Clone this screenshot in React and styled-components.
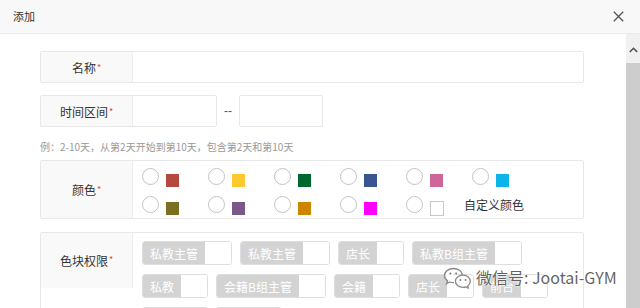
import React from 'react';
import styled, { createGlobalStyle } from 'styled-components';

const Global = createGlobalStyle`
  html, body { margin: 0; padding: 0; background: #fff; }
  body {
    width: 640px; height: 308px; overflow: hidden;
    font-family: "Noto Sans CJK SC", "Noto Sans", sans-serif;
    color: #333;
  }
  * { box-sizing: border-box; }
`;

const Dialog = styled.div`
  width: 640px; height: 308px;
  display: flex; flex-direction: column;
  position: relative; overflow: hidden; background: #fff;
`;

const Header = styled.div`
  height: 34px; flex: none;
  border-bottom: 1px solid #ebebeb;
  background: #f8f8f8;
  display: flex; align-items: center; justify-content: space-between;
  padding: 0 16px 0 13px;
`;

const Title = styled.div`
  font-size: 11px; color: #333; line-height: 1;
`;

const CloseBtn = styled.div`
  width: 11px; height: 11px; display: flex;
`;

const Body = styled.div`
  flex: 1; display: flex; min-height: 0;
`;

const Content = styled.div`
  flex: 1; padding: 17px 0 0 40px; overflow: hidden;
`;

const Form = styled.div`
  width: 544px; display: flex; flex-direction: column;
`;

const Scrollbar = styled.div`
  width: 14px; flex: none; background: #f1f1f1;
  display: flex; flex-direction: column;
`;

const ScrollUp = styled.div`
  height: 29px; flex: none; display: flex; justify-content: center;
  padding-top: 13px;
`;

const Thumb = styled.div`
  flex: 1; background: #cdcdcd;
`;

const FieldRow = styled.div`
  display: flex; align-items: center;
  margin-top: ${p => p.$mt || 0}px;
`;

const FieldBox = styled.div`
  display: flex; align-items: stretch;
  border: 1px solid #e8e8e8; border-radius: 2px;
  width: ${p => p.$w ? p.$w + 'px' : '100%'};
  min-height: ${p => p.$h || 32}px;
  background: #fff;
`;

const Label = styled.div`
  width: 92px; flex: none;
  background: #f9f9f9; border-right: 1px solid #eeeeee;
  display: flex; align-items: center; justify-content: center;
  font-size: 12px; color: #333;
  height: ${p => p.$h ? p.$h + 'px' : 'auto'};
  align-self: ${p => p.$h ? 'flex-start' : 'stretch'};
`;

const Star = styled.span`
  color: #f33; font-size: 9px; align-self: flex-start;
  margin-top: ${p => p.$top || 9}px; margin-left: 1px;
`;

const Input = styled.div`
  flex: 1; background: #fff;
`;

const Dash = styled.span`
  font-family: "Liberation Sans", sans-serif;
  font-size: 12px; color: #555; margin: 0 7px 0 7px; letter-spacing: 0;
`;

const SoloInput = styled.div`
  width: 84px; height: 32px;
  border: 1px solid #e8e8e8; border-radius: 2px; background: #fff;
`;

const Hint = styled.div`
  font-size: 10px; color: #999; line-height: 20px;
  margin: 10px 0 3px 0; white-space: nowrap;
`;

const ColorArea = styled.div`
  flex: 1; padding: 1px 0 0 9px;
  display: flex; flex-direction: column;
`;

const ColorLine = styled.div`
  height: 28px; display: flex; align-items: center;
`;

const ColorItem = styled.div`
  width: ${p => p.$w || 66}px; flex: none;
  display: flex; align-items: center;
`;

const Radio = styled.span`
  width: 17px; height: 17px; border-radius: 50%;
  border: 1px solid #c2c2c2; background: #fff; flex: none;
`;

const Swatch = styled.span`
  width: ${p => p.$plain ? 14 : 13}px;
  height: ${p => p.$plain ? 15 : 13}px;
  margin-left: 7px; margin-top: 8px;
  background: ${p => p.$c};
  border: ${p => p.$plain ? '1px solid #c8c8c8' : 'none'};
  flex: none;
`;

const CustomText = styled.span`
  font-size: 12px; color: #333;
`;

const TagArea = styled.div`
  flex: 1; padding: 8px 8px 0 9px;
  display: flex; flex-wrap: wrap; align-content: flex-start;
  column-gap: 8px; row-gap: 9px;
`;

const Tag = styled.div`
  height: 24px; display: flex;
  border: 1px solid #dedede; border-radius: 3px; overflow: hidden;
`;

const TagName = styled.span`
  background: #d3d3d3; color: #fff; font-size: 12px;
  padding: 0 7px; display: flex; align-items: center; white-space: nowrap;
`;

const TagValue = styled.span`
  width: 26px; background: #fff;
`;

const Watermark = styled.div`
  position: absolute; left: 442px; top: 265px;
  display: flex; align-items: center; gap: 3px;
  pointer-events: none;
`;

const WatermarkText = styled.span`
  font-size: 16px; color: rgba(70, 70, 70, 0.85);
  font-family: "Noto Sans CJK SC", "Noto Sans", sans-serif;
  text-shadow: 0 0 2px #fff, 0 0 2px #fff;
  white-space: nowrap;
`;

const colorsRow1 = ['#b5483f', '#fec92f', '#00672f', '#395592', '#cf6699', '#0db4e8'];
const colorsRow2 = ['#7b7021', '#7b5889', '#cd8500', '#ff00ff'];

const tags = ['私教主管', '私教主管', '店长', '私教B组主管', '私教', '会籍B组主管', '会籍', '店长', '前台', '私教', '会籍'];

function WeChatIcon() {
  return (
    <svg width="31" height="23" viewBox="0 0 31 23" fill="none">
      <path d="M11.5 2.5C6.3 2.5 2.5 5.8 2.5 9.6c0 2.2 1.2 4 3 5.3l-0.9 2.8 3.2-1.7c1.2 0.4 2.4 0.6 3.7 0.6"
        stroke="#8a8a8a" strokeWidth="1.3" fill="rgba(255,255,255,0.7)" strokeLinecap="round" />
      <path d="M11.5 2.5c4.7 0 8.4 2.8 8.9 6.3" stroke="#8a8a8a" strokeWidth="1.3" strokeLinecap="round" />
      <circle cx="8.3" cy="7.6" r="1" fill="#777" />
      <circle cx="14.2" cy="7.6" r="1" fill="#777" />
      <path d="M21 9.2c-4.3 0-7.6 2.8-7.6 6.1s3.3 6.1 7.6 6.1c1 0 1.9-0.2 2.8-0.5l2.6 1.4-0.7-2.3c1.6-1.1 2.6-2.8 2.6-4.7 0-3.3-3.1-6.1-7.3-6.1z"
        stroke="#8a8a8a" strokeWidth="1.3" fill="rgba(255,255,255,0.7)" strokeLinejoin="round" />
      <circle cx="18.4" cy="14" r="0.9" fill="#777" />
      <circle cx="23.6" cy="14" r="0.9" fill="#777" />
    </svg>
  );
}

export default function App() {
  return (
    <>
      <Global />
      <Dialog>
        <Header>
          <Title>添加</Title>
          <CloseBtn>
            <svg width="11" height="11" viewBox="0 0 11 11">
              <path d="M0.8 0.8L10.2 10.2M10.2 0.8L0.8 10.2" stroke="#555" strokeWidth="1.3" />
            </svg>
          </CloseBtn>
        </Header>
        <Body>
          <Content>
            <Form>
              <FieldRow>
                <FieldBox>
                  <Label>名称<Star>*</Star></Label>
                  <Input />
                </FieldBox>
              </FieldRow>
              <FieldRow $mt={12}>
                <FieldBox $w={177}>
                  <Label>时间区间<Star>*</Star></Label>
                  <Input />
                </FieldBox>
                <Dash>--</Dash>
                <SoloInput />
              </FieldRow>
              <Hint>例：2-10天，从第2天开始到第10天，包含第2天和第10天</Hint>
              <FieldRow>
                <FieldBox $h={59}>
                  <Label>颜色<Star $top={22}>*</Star></Label>
                  <ColorArea>
                    <ColorLine>
                      {colorsRow1.map((c, i) => (
                        <ColorItem key={i}><Radio /><Swatch $c={c} /></ColorItem>
                      ))}
                    </ColorLine>
                    <ColorLine>
                      {colorsRow2.map((c, i) => (
                        <ColorItem key={i}><Radio /><Swatch $c={c} /></ColorItem>
                      ))}
                      <ColorItem $w={58}><Radio /><Swatch $c="#fff" $plain /></ColorItem>
                      <CustomText>自定义颜色</CustomText>
                    </ColorLine>
                  </ColorArea>
                </FieldBox>
              </FieldRow>
              <FieldRow $mt={13}>
                <FieldBox $h={120}>
                  <Label $h={55}>色块权限<Star $top={20}>*</Star></Label>
                  <TagArea>
                    {tags.map((t, i) => (
                      <Tag key={i}><TagName>{t}</TagName><TagValue /></Tag>
                    ))}
                  </TagArea>
                </FieldBox>
              </FieldRow>
            </Form>
          </Content>
          <Scrollbar>
            <ScrollUp>
              <svg width="9" height="6" viewBox="0 0 9 6">
                <path d="M0.8 5L4.5 1.3L8.2 5" stroke="#505050" strokeWidth="1.6" fill="none" />
              </svg>
            </ScrollUp>
            <Thumb />
          </Scrollbar>
        </Body>
        <Watermark>
          <WeChatIcon />
          <WatermarkText>微信号: Jootai-GYM</WatermarkText>
        </Watermark>
      </Dialog>
    </>
  );
}
